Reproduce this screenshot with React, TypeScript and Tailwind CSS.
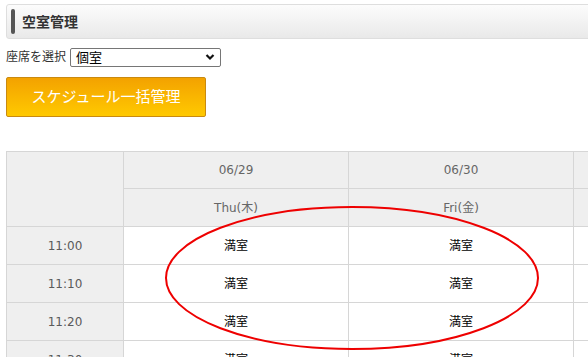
import React from "react";

const dates = [
  { d: "06/29", w: "Thu(木)" },
  { d: "06/30", w: "Fri(金)" },
  { d: "", w: "" },
];

const times = ["11:00", "11:10", "11:20", "11:30"];

export default function App() {
  return (
    <div
      className="relative w-[588px] h-[357px] overflow-hidden bg-white text-[#333]"
      style={{ fontFamily: '"DejaVu Sans", "Noto Sans CJK JP", sans-serif' }}
    >
      <div className="w-[800px] pl-[6px] pt-[4px]">
        {/* heading */}
        <div className="h-[35px] flex items-center rounded-[3px] border border-[#dedede] bg-gradient-to-b from-[#fcfcfc] to-[#e9e9e9] pl-[4px]">
          <span className="w-[4px] h-[25px] rounded-[2px] bg-[#555]" />
          <h1 className="ml-[7px] text-[14px] font-bold text-[#333] leading-none">空室管理</h1>
        </div>

        {/* seat select */}
        <div className="mt-[8px] flex items-center h-[20px]">
          <label className="text-[12px] text-[#333]">座席を選択</label>
          <div className="ml-[4px] w-[151px] h-[19px] flex items-center justify-between rounded-[2px] border border-[#767676] px-[5px]">
            <span className="text-[13px] text-black leading-none">個室</span>
            <svg width="10" height="8" viewBox="0 0 10 8">
              <path d="M1.5 2 L5 5.5 L8.5 2" fill="none" stroke="#111" strokeWidth="2.2" />
            </svg>
          </div>
        </div>

        {/* bulk button */}
        <button className="mt-[10px] w-[200px] h-[40px] rounded-[2px] border border-[#c98a10] bg-gradient-to-b from-[#f3a200] to-[#ffc900] text-white text-[15px]">
          スケジュール一括管理
        </button>

        {/* schedule table */}
        <table className="mt-[34px] w-[793px] table-fixed border-collapse text-[12px]">
          <colgroup>
            <col className="w-[117px]" />
            <col className="w-[225px]" />
            <col className="w-[225px]" />
            <col className="w-[226px]" />
          </colgroup>
          <thead>
            <tr className="h-[37px]">
              <th rowSpan={2} className="border border-[#d6d6d6] bg-[#efefef]" />
              {dates.map((c, i) => (
                <th key={i} className="border border-[#d6d6d6] bg-[#efefef] font-normal text-[#666]">
                  {c.d}
                </th>
              ))}
            </tr>
            <tr className="h-[38px]">
              {dates.map((c, i) => (
                <th key={i} className="border border-[#d6d6d6] bg-[#efefef] font-normal text-[#666]">
                  {c.w}
                </th>
              ))}
            </tr>
          </thead>
          <tbody>
            {times.map((t) => (
              <tr key={t} className="h-[38px]">
                <td className="border border-[#d6d6d6] bg-[#efefef] text-center text-[#5a5a5a]">{t}</td>
                <td className="border border-[#d6d6d6] text-center text-black">満室</td>
                <td className="border border-[#d6d6d6] text-center text-black">満室</td>
                <td className="border border-[#d6d6d6]" />
              </tr>
            ))}
          </tbody>
        </table>
      </div>

      {/* red annotation ring */}
      <svg className="absolute left-0 top-0 pointer-events-none" width="588" height="357">
        <ellipse cx="352" cy="278" rx="186" ry="71" fill="none" stroke="#ee0000" strokeWidth="2" />
      </svg>
    </div>
  );
}
